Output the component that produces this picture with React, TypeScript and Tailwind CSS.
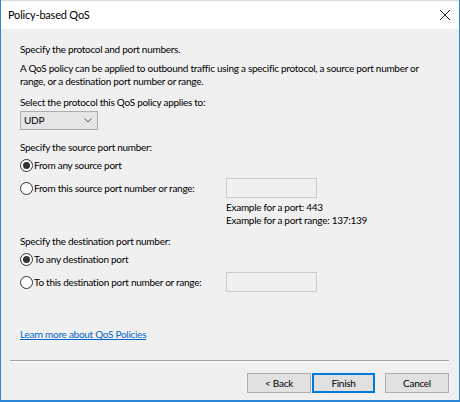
import { useState } from 'react';

function Radio({ checked }: { checked: boolean }) {
  return (
    <span className="w-[13px] h-[13px] rounded-full border border-[#333333] bg-white flex items-center justify-center shrink-0">
      {checked && <span className="w-[7px] h-[7px] rounded-full bg-[#333333]" />}
    </span>
  );
}

function Box() {
  return <div className="w-[91px] h-[20px] border border-[#cccccc] bg-[#f0f0f0] shrink-0" />;
}

export default function App() {
  const [src, setSrc] = useState('any');
  const [dst, setDst] = useState('any');

  return (
    <div
      className="w-[460px] h-[402px] bg-[#f0f0f0] border-l border-r border-b-2 border-[#2b88d8] flex flex-col text-[10px] tracking-[-0.28px] text-black whitespace-nowrap overflow-hidden"
      style={{ fontFamily: 'Lato, "Noto Sans", sans-serif' }}
    >
      {/* title bar */}
      <div className="h-[29px] bg-white border-t border-[#d9d9d9] flex items-center justify-between pl-[7px] pr-[7px] shrink-0">
        <span className="text-[11px] tracking-[-0.2px]">Policy-based QoS</span>
        <svg width="12" height="12" viewBox="0 0 12 12" className="mr-[1px]">
          <path d="M1 1L11 11M11 1L1 11" stroke="#222222" strokeWidth="1" />
        </svg>
      </div>

      <div className="flex flex-col pl-[19px] pr-[10px]">
        <div className="mt-[13px] h-[15px] leading-[15px]">Specify the protocol and port numbers.</div>
        <div className="mt-[5px] leading-[13px]">
          A QoS policy can be applied to outbound traffic using a specific protocol, a source port number or
          <br />
          range, or a destination port number or range.
        </div>

        <div className="mt-[7px] h-[15px] leading-[15px]">Select the protocol this QoS policy applies to:</div>
        <div className="mt-[1px] w-[78px] h-[19px] bg-[#e5e5e5] border border-[#adadad] flex items-center justify-between pl-[3px] pr-[5px]">
          <span>UDP</span>
          <svg width="8" height="5" viewBox="0 0 8 5">
            <path d="M0.5 0.5L4 4L7.5 0.5" fill="none" stroke="#555555" strokeWidth="1" />
          </svg>
        </div>

        <div className="mt-[10px] h-[15px] leading-[15px]">Specify the source port number:</div>
        <label className="mt-[2px] h-[16px] flex items-center gap-[1px] w-fit" onClick={() => setSrc('any')}>
          <Radio checked={src === 'any'} />
          <span>From any source port</span>
        </label>
        <div className="mt-[5px] h-[20px] flex items-center">
          <label className="w-[206px] flex items-center gap-[1px]" onClick={() => setSrc('range')}>
            <Radio checked={src === 'range'} />
            <span>From this source port number or range:</span>
          </label>
          <Box />
        </div>
        <div className="mt-[3px] pl-[206px] leading-[13px]">
          Example for a port: 443
          <br />
          Example for a port range: 137:139
        </div>

        <div className="mt-[7px] h-[15px] leading-[15px]">Specify the destination port number:</div>
        <label className="mt-[2px] h-[16px] flex items-center gap-[1px] w-fit" onClick={() => setDst('any')}>
          <Radio checked={dst === 'any'} />
          <span>To any destination port</span>
        </label>
        <div className="mt-[5px] h-[20px] flex items-center">
          <label className="w-[206px] flex items-center gap-[1px]" onClick={() => setDst('range')}>
            <Radio checked={dst === 'range'} />
            <span>To this destination port number or range:</span>
          </label>
          <Box />
        </div>

        <a href="#" className="mt-[35px] h-[15px] leading-[15px] text-[#0066cc] underline w-fit">
          Learn more about QoS Policies
        </a>
      </div>

      <div className="mt-[18px] ml-[9px] mr-[10px] h-[2px] border-t border-[#a0a0a0] border-b border-b-white shrink-0" />

      <div className="mt-[11px] flex justify-end pr-[10px]">
        <button className="w-[64px] h-[20px] bg-[#e1e1e1] border border-[#adadad]">&lt; Back</button>
        <button className="ml-[1px] w-[63px] h-[20px] bg-[#e1e1e1] border-2 border-[#0078d7]">Finish</button>
        <button className="ml-[10px] w-[64px] h-[20px] bg-[#e1e1e1] border border-[#adadad]">Cancel</button>
      </div>
    </div>
  );
}
